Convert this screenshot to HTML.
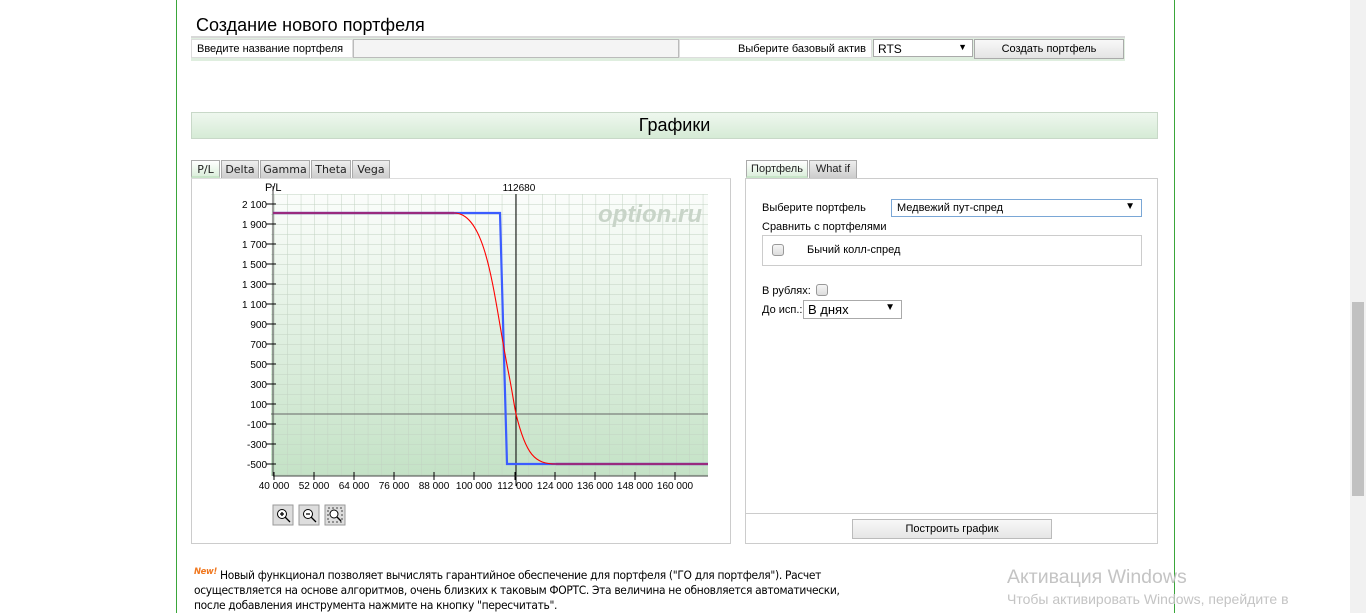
<!DOCTYPE html>
<html><head><meta charset="utf-8"><style>
*{margin:0;padding:0;box-sizing:border-box}
body{width:1366px;height:613px;overflow:hidden;background:#fff;font-family:"Liberation Sans",Arial,sans-serif;font-size:11px;color:#000;position:relative}
.a{position:absolute}
.tab{position:absolute;top:160px;height:18px;border:1px solid #aaa;border-bottom:none;background:linear-gradient(#eee,#ccc);font-family:"DejaVu Sans",sans-serif;font-size:11px;line-height:17px;text-align:center;color:#222}
.tab.on{background:linear-gradient(#fff,#dcefdc);border-bottom:2px solid #c8e4c8}
.cb{position:absolute;width:12px;height:12px;border:1px solid #999;border-radius:3px;background:linear-gradient(#f5f5f5,#ddd)}
</style></head><body>
<div class="a" style="left:176px;top:0;width:1px;height:613px;background:#3aa63a"></div>
<div class="a" style="left:1174px;top:0;width:1px;height:613px;background:#3aa63a"></div>
<div class="a" style="left:1350px;top:0;width:16px;height:613px;background:#f1f1f1"></div>
<div class="a" style="left:1352px;top:302px;width:12px;height:194px;background:#c1c1c1"></div>

<div class="a" style="left:196px;top:15px;font-size:18px">Создание нового портфеля</div>
<div class="a" style="left:191px;top:36px;width:934px;height:25px;background:#dfeedf;border-top:2px solid #d8d8d8"></div>
<div class="a" style="left:191px;top:39px;width:162px;height:19px;background:#fff;border:1px solid #ddd;padding:3px 5px">Введите название портфеля</div>
<div class="a" style="left:353px;top:39px;width:326px;height:19px;background:#f4f4f4;border:1px solid #bbb"></div>
<div class="a" style="left:679px;top:39px;width:193px;height:19px;background:#fff;border:1px solid #ddd;padding:3px 5px;text-align:right">Выберите базовый актив</div>
<div class="a" style="left:873px;top:39px;width:100px;height:18px;background:#fff;border:1px solid #aaa;padding:2px 4px;font-size:12px">RTS<span style="position:absolute;right:5px;top:2px;font-size:9px">▼</span></div>
<div class="a" style="left:974px;top:39px;width:150px;height:20px;background:linear-gradient(#f8f8f8,#e4e4e4);border:1px solid #aaa;text-align:center;line-height:18px">Создать портфель</div>

<div class="a" style="left:191px;top:112px;width:967px;height:27px;background:linear-gradient(#eef7ee,#d6ebd6);border:1px solid #c8d8c8;text-align:center;font-size:18px;line-height:25px">Графики</div>

<div class="tab on" style="left:191px;width:29px">P/L</div>
<div class="tab" style="left:221px;width:38px">Delta</div>
<div class="tab" style="left:260px;width:50px">Gamma</div>
<div class="tab" style="left:311px;width:40px">Theta</div>
<div class="tab" style="left:352px;width:38px">Vega</div>
<div class="a" style="left:191px;top:178px;width:540px;height:366px;border:1px solid #ccc;border-top:1px solid #ddd"></div>

<svg class="a" style="left:0;top:0" width="740" height="545">
<defs>
<linearGradient id="g" x1="0" y1="0" x2="0" y2="1"><stop offset="0" stop-color="#fbfdfb"/><stop offset="1" stop-color="#c4e2c6"/></linearGradient>
<pattern id="p" x="274" y="194" width="13.4" height="10" patternUnits="userSpaceOnUse"><path d="M0 0V10M0 0H13.4" stroke="#c2d2c2" stroke-width="1" fill="none"/></pattern>
</defs>
<rect x="271" y="194" width="437" height="282" fill="url(#g)"/>
<rect x="271" y="194" width="437" height="282" fill="url(#p)"/>
<text x="702" y="222" text-anchor="end" font-family="Liberation Sans" font-weight="bold" font-style="italic" font-size="24" fill="#c8d4c8">option.ru</text>
<line x1="271" y1="414" x2="708" y2="414" stroke="#666"/>
<line x1="516" y1="194" x2="516" y2="486" stroke="#000"/>
<line x1="273" y1="186" x2="273" y2="476" stroke="#444"/>
<line x1="273" y1="476" x2="708" y2="476" stroke="#444"/>
<g stroke="#000">
<path d="M266 204H276M266 224H276M266 244H276M266 264H276M266 284H276M266 304H276M266 324H276M266 344H276M266 364H276M266 384H276M266 404H276M266 424H276M266 444H276M266 464H276"/>
<path d="M274 472V480M314 472V480M354 472V480M394 472V480M434 472V480M474 472V480M515 472V480M555 472V480M595 472V480M635 472V480M675 472V480"/>
</g>
<g font-family="Liberation Sans" font-size="10" text-anchor="end" fill="#000">
<text x="267" y="208">2 100</text><text x="267" y="228">1 900</text><text x="267" y="248">1 700</text><text x="267" y="268">1 500</text><text x="267" y="288">1 300</text><text x="267" y="308">1 100</text><text x="267" y="328">900</text><text x="267" y="348">700</text><text x="267" y="368">500</text><text x="267" y="388">300</text><text x="267" y="408">100</text><text x="267" y="428">-100</text><text x="267" y="448">-300</text><text x="267" y="468">-500</text>
</g>
<g font-family="Liberation Sans" font-size="10" text-anchor="middle">
<text x="274" y="489">40 000</text><text x="314" y="489">52 000</text><text x="354" y="489">64 000</text><text x="394" y="489">76 000</text><text x="434" y="489">88 000</text><text x="474" y="489">100 000</text><text x="515" y="489">112 000</text><text x="555" y="489">124 000</text><text x="595" y="489">136 000</text><text x="635" y="489">148 000</text><text x="675" y="489">160 000</text>
<text x="519" y="191">112680</text>
</g>
<text x="265" y="191" font-family="Liberation Sans" font-size="11">P/L</text>
<path d="M273 213H500L507 464H708" stroke="#3b5cff" stroke-width="2.2" fill="none"/>
<path d="M273 213H454M556 464H708" stroke="#992a7e" stroke-width="2.2" fill="none"/>
<path d="M454 213C488 213 494 300 508 370C513 395 514 405 516 414C526 455 535 464 556 464" stroke="#f00" stroke-width="1.1" fill="none"/>
<g>
<rect x="273" y="505" width="20" height="20" fill="#ddd" stroke="#999"/><circle cx="282" cy="514" r="4.5" fill="#fff" stroke="#000"/><path d="M280 514H284M282 512V516M285 517L290 522" stroke="#000" stroke-width="1.3"/>
<rect x="299" y="505" width="20" height="20" fill="#ddd" stroke="#999"/><circle cx="308" cy="514" r="4.5" fill="#fff" stroke="#000"/><path d="M306 514H310M311 517L316 522" stroke="#000" stroke-width="1.3"/>
<rect x="325" y="505" width="20" height="20" fill="#ddd" stroke="#999"/><rect x="328" y="508" width="14" height="14" fill="none" stroke="#444" stroke-dasharray="2 2"/><circle cx="334" cy="514" r="4" fill="#fff" stroke="#000"/><path d="M337 517L341 521" stroke="#000" stroke-width="1.3"/>
</g>
</svg>

<div class="tab on" style="left:746px;width:62px;font-family:'Liberation Sans',sans-serif">Портфель</div>
<div class="tab" style="left:809px;width:48px;font-family:'Liberation Sans',sans-serif">What if</div>
<div class="a" style="left:745px;top:178px;width:413px;height:366px;border:1px solid #ccc"></div>
<div class="a" style="left:745px;top:513px;width:413px;height:1px;background:#ccc"></div>
<div class="a" style="left:762px;top:202px">Выберите портфель</div>
<div class="a" style="left:891px;top:199px;width:251px;height:18px;border:1px solid #7aa7d6;padding:2px 5px">Медвежий пут-спред<span style="position:absolute;right:6px;top:1px;font-size:10px">▼</span></div>
<div class="a" style="left:762px;top:221px">Сравнить с портфелями</div>
<div class="a" style="left:762px;top:235px;width:380px;height:31px;border:1px solid #ccc"></div>
<div class="cb" style="left:772px;top:244px"></div>
<div class="a" style="left:807px;top:244px">Бычий колл-спред</div>
<div class="a" style="left:762px;top:285px">В рублях:</div>
<div class="cb" style="left:816px;top:284px"></div>
<div class="a" style="left:762px;top:304px">До исп.:</div>
<div class="a" style="left:803px;top:300px;width:99px;height:19px;border:1px solid #aaa;padding:1px 4px;font-size:13px">В днях<span style="position:absolute;right:6px;top:1px;font-size:10px">▼</span></div>
<div class="a" style="left:852px;top:519px;width:200px;height:20px;background:linear-gradient(#f8f8f8,#e6e6e6);border:1px solid #bbb;text-align:center;line-height:18px">Построить график</div>

<div class="a" style="left:194px;top:565px;width:728px;font-family:'DejaVu Sans',sans-serif;font-size:11.5px;line-height:15px;letter-spacing:-0.35px;transform:scaleX(0.93);transform-origin:left top"><sup style="color:#f07820;font-style:italic;font-weight:bold;font-size:9px">New!</sup> Новый функционал позволяет вычислять гарантийное обеспечение для портфеля ("ГО для портфеля"). Расчет осуществляется на основе алгоритмов, очень близких к таковым ФОРТС. Эта величина не обновляется автоматически, после добавления инструмента нажмите на кнопку "пересчитать".</div>

<div class="a" style="left:1007px;top:566px;font-size:19.5px;color:#c4c4c4;white-space:nowrap">Активация Windows</div>
<div class="a" style="left:1007px;top:591px;font-size:14px;color:#c4c4c4;white-space:nowrap">Чтобы активировать Windows, перейдите в</div>
</body></html>
